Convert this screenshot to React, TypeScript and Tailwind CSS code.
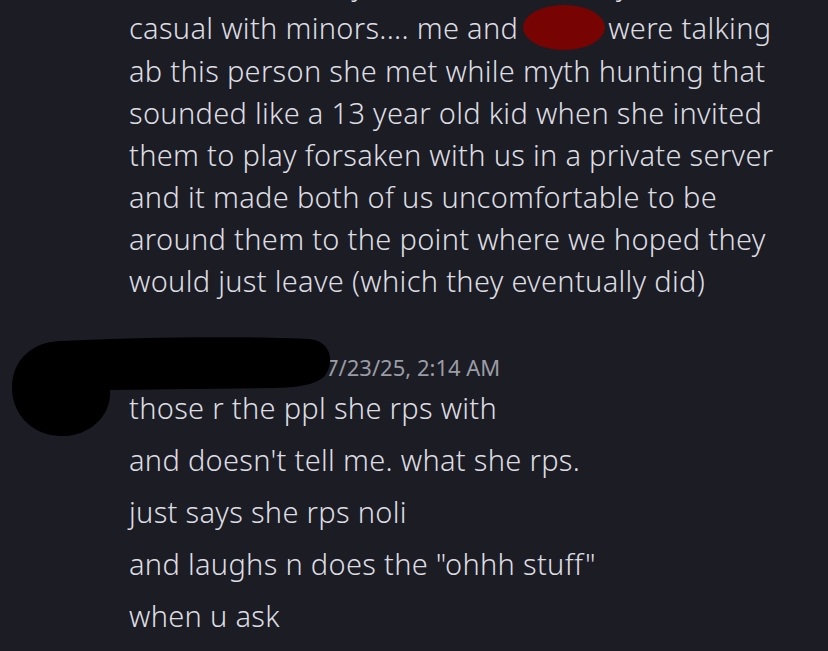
import React from "react";

const block1 = [
  "ab this person she met while myth hunting that",
  "sounded like a 13 year old kid when she invited",
  "them to play forsaken with us in a private server",
  "and it made both of us uncomfortable to be",
  "around them to the point where we hoped they",
  "would just leave (which they eventually did)",
];

const msgs = [
  "those r the ppl she rps with",
  "and doesn't tell me. what she rps.",
  "just says she rps noli",
  'and laughs n does the "ohhh stuff"',
  "when u ask",
];

export default function App() {
  return (
    <div
      className="relative w-[828px] h-[651px] overflow-hidden bg-[#1c1c24] text-[#dcdde2] font-light"
      style={{ fontFamily: '"Noto Sans", "Open Sans", sans-serif' }}
    >
      <div className="pl-[129px]">
        <div className="mt-[-37px] text-[29px] tracking-[0.3px] leading-[42px] whitespace-nowrap">
          <div>that is weird, they think it's fine to say that and be so</div>
          <div className="flex items-center">
            <span>casual with minors.... me and</span>
            <span className="inline-block w-[82px] h-[45px] ml-[5px] mr-[3px] rounded-[50%] bg-[#780303]" />
            <span>were talking</span>
          </div>
          {block1.map((l) => (
            <div key={l}>{l}</div>
          ))}
        </div>

        <div className="mt-[51px] flex items-center h-[28px] whitespace-nowrap">
          <span className="w-[197px] text-[24px] text-white">username</span>
          <span className="text-[22px] font-normal text-[#9a9ca6]">7/23/25, 2:14 AM</span>
        </div>
        <div className="mt-[1px] text-[29px] tracking-[0.3px] leading-[52px] whitespace-nowrap">
          {msgs.map((m) => (
            <div key={m}>{m}</div>
          ))}
        </div>
      </div>

      <svg
        className="absolute left-0 top-0"
        width="360"
        height="450"
        viewBox="0 0 360 450"
      >
        <path
          d="M60 341 C 140 337, 250 336, 310 339 C 330 341, 334 360, 327 372 C 322 384, 300 388, 270 388 L 110 390 C 112 415, 90 437, 60 436 C 30 435, 12 412, 12 388 C 12 360, 32 342, 60 341 Z"
          fill="#000"
        />
      </svg>
    </div>
  );
}
